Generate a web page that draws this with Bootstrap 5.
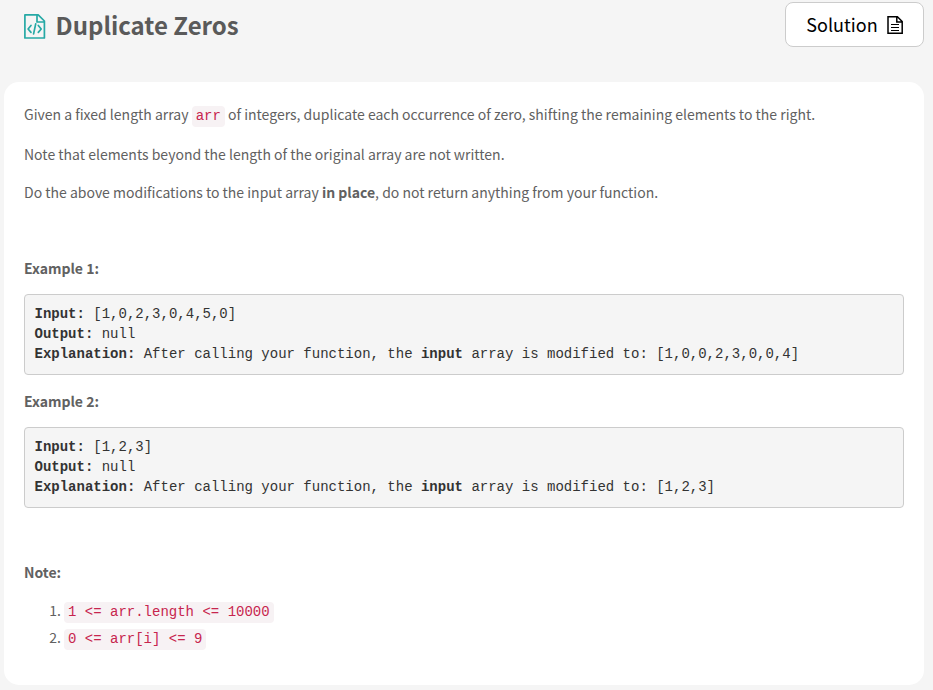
<!DOCTYPE html>
<html lang="en">
<head>
<meta charset="utf-8">
<meta name="viewport" content="width=device-width, initial-scale=1">
<title>Duplicate Zeros</title>
<link href="https://cdn.jsdelivr.net/npm/bootstrap@5.3.0/dist/css/bootstrap.min.css" rel="stylesheet">
<style>
  body { background: #f5f5f5; color: #616161; font-family: "Source Sans Pro", "Noto Sans CJK SC", sans-serif; font-size: 14px; line-height: 23px; height: 690px; overflow: hidden; }
  .topbar { height: 82px; padding: 2px 9px 0 24px; }
  .page-title { font-size: 24px; line-height: 46px; color: #5a5a5a; }
  .title-icon { width: 22px; height: 25px; margin: 12px 9.5px 0 0; }
  .btn-solution { width: 139px; height: 45px; border: 1px solid #ccc; border-radius: 8px; background: #fff; color: #000; font-size: 18px; line-height: 27px; padding: 0 0 0 1px; }
  .panel { margin: 0 9px 0 4px; height: 603px; border-radius: 15px; padding: 21px 20px 0; }
  .panel p { height: 23px; margin: 0 0 15px; }
  .panel .lead-in { margin-bottom: 17px; }
  .panel .spaced { margin-bottom: 53px; }
  .panel .label { margin-bottom: 14px; }
  .panel code { font: 14px/19px "Liberation Mono", monospace; color: #c7254e; background: #f7f2f4; border-radius: 4px; padding: 2px 4px 3px; }
  .panel pre { font: 14px/20px "Liberation Mono", monospace; color: #333; background: #f5f5f5; border: 1px solid #ccc; border-radius: 4px; padding: 9px 9.5px 10px; margin: 0 0 15px; }
  .panel pre.last { margin-bottom: 53px; }
  .panel ol { padding-left: 40px; margin: 15px 0 0; }
  .panel li { height: 27px; }
</style>
</head>
<body>
<header class="topbar d-flex justify-content-between align-items-start">
  <div class="d-flex align-items-start">
    <svg class="title-icon" viewBox="0 0 22 25" fill="none" stroke="#26a9a5" stroke-width="1.7" stroke-linejoin="round" stroke-linecap="round" aria-hidden="true">
      <path d="M.9.9H14.2L20.4 7V24H.9ZM13 1V8H20.2"/>
      <path d="M7 11.5L4.1 15L7 18.4M14.3 11.5L17.2 15L14.3 18.4M11.7 9.8L9.6 19.8"/>
    </svg>
    <h1 class="page-title fw-bold m-0">Duplicate Zeros</h1>
  </div>
  <button type="button" class="btn btn-solution d-flex align-items-center justify-content-center gap-2"><span>Solution</span>
    <svg width="18" height="20" viewBox="0 0 18 20" fill="none" stroke="#000" stroke-width="1.5" aria-hidden="true">
      <path d="M2 1.7H11.4L16.2 6.5V18.3H2ZM10.8 2V7H16"/><path d="M5 9.5H13M5 12.5H13M5 15.5H13" stroke-width="1.2"/>
    </svg>
  </button>
</header>
<main class="panel bg-white">
  <p class="lead-in">Given a fixed length array <code>arr</code> of integers, duplicate each occurrence of zero, shifting the remaining elements to the right.</p>
  <p>Note that elements beyond the length of the original array are not written.</p>
  <p class="spaced">Do the above modifications to the input array <strong>in place</strong>, do not return anything from your function.</p>
  <p class="label"><strong>Example 1:</strong></p>
<pre><strong>Input: </strong>[1,0,2,3,0,4,5,0]
<strong>Output: </strong>null
<strong>Explanation: </strong>After calling your function, the <strong>input</strong> array is modified to: [1,0,0,2,3,0,0,4]</pre>
  <p class="label"><strong>Example 2:</strong></p>
<pre class="last"><strong>Input: </strong>[1,2,3]
<strong>Output: </strong>null
<strong>Explanation: </strong>After calling your function, the <strong>input</strong> array is modified to: [1,2,3]</pre>
  <p class="label"><strong>Note:</strong></p>
  <ol>
    <li><code>1 &lt;= arr.length &lt;= 10000</code></li>
    <li><code>0 &lt;= arr[i] &lt;= 9</code></li>
  </ol>
</main>
<script src="https://cdn.jsdelivr.net/npm/bootstrap@5.3.0/dist/js/bootstrap.bundle.min.js"></script>
</body>
</html>
